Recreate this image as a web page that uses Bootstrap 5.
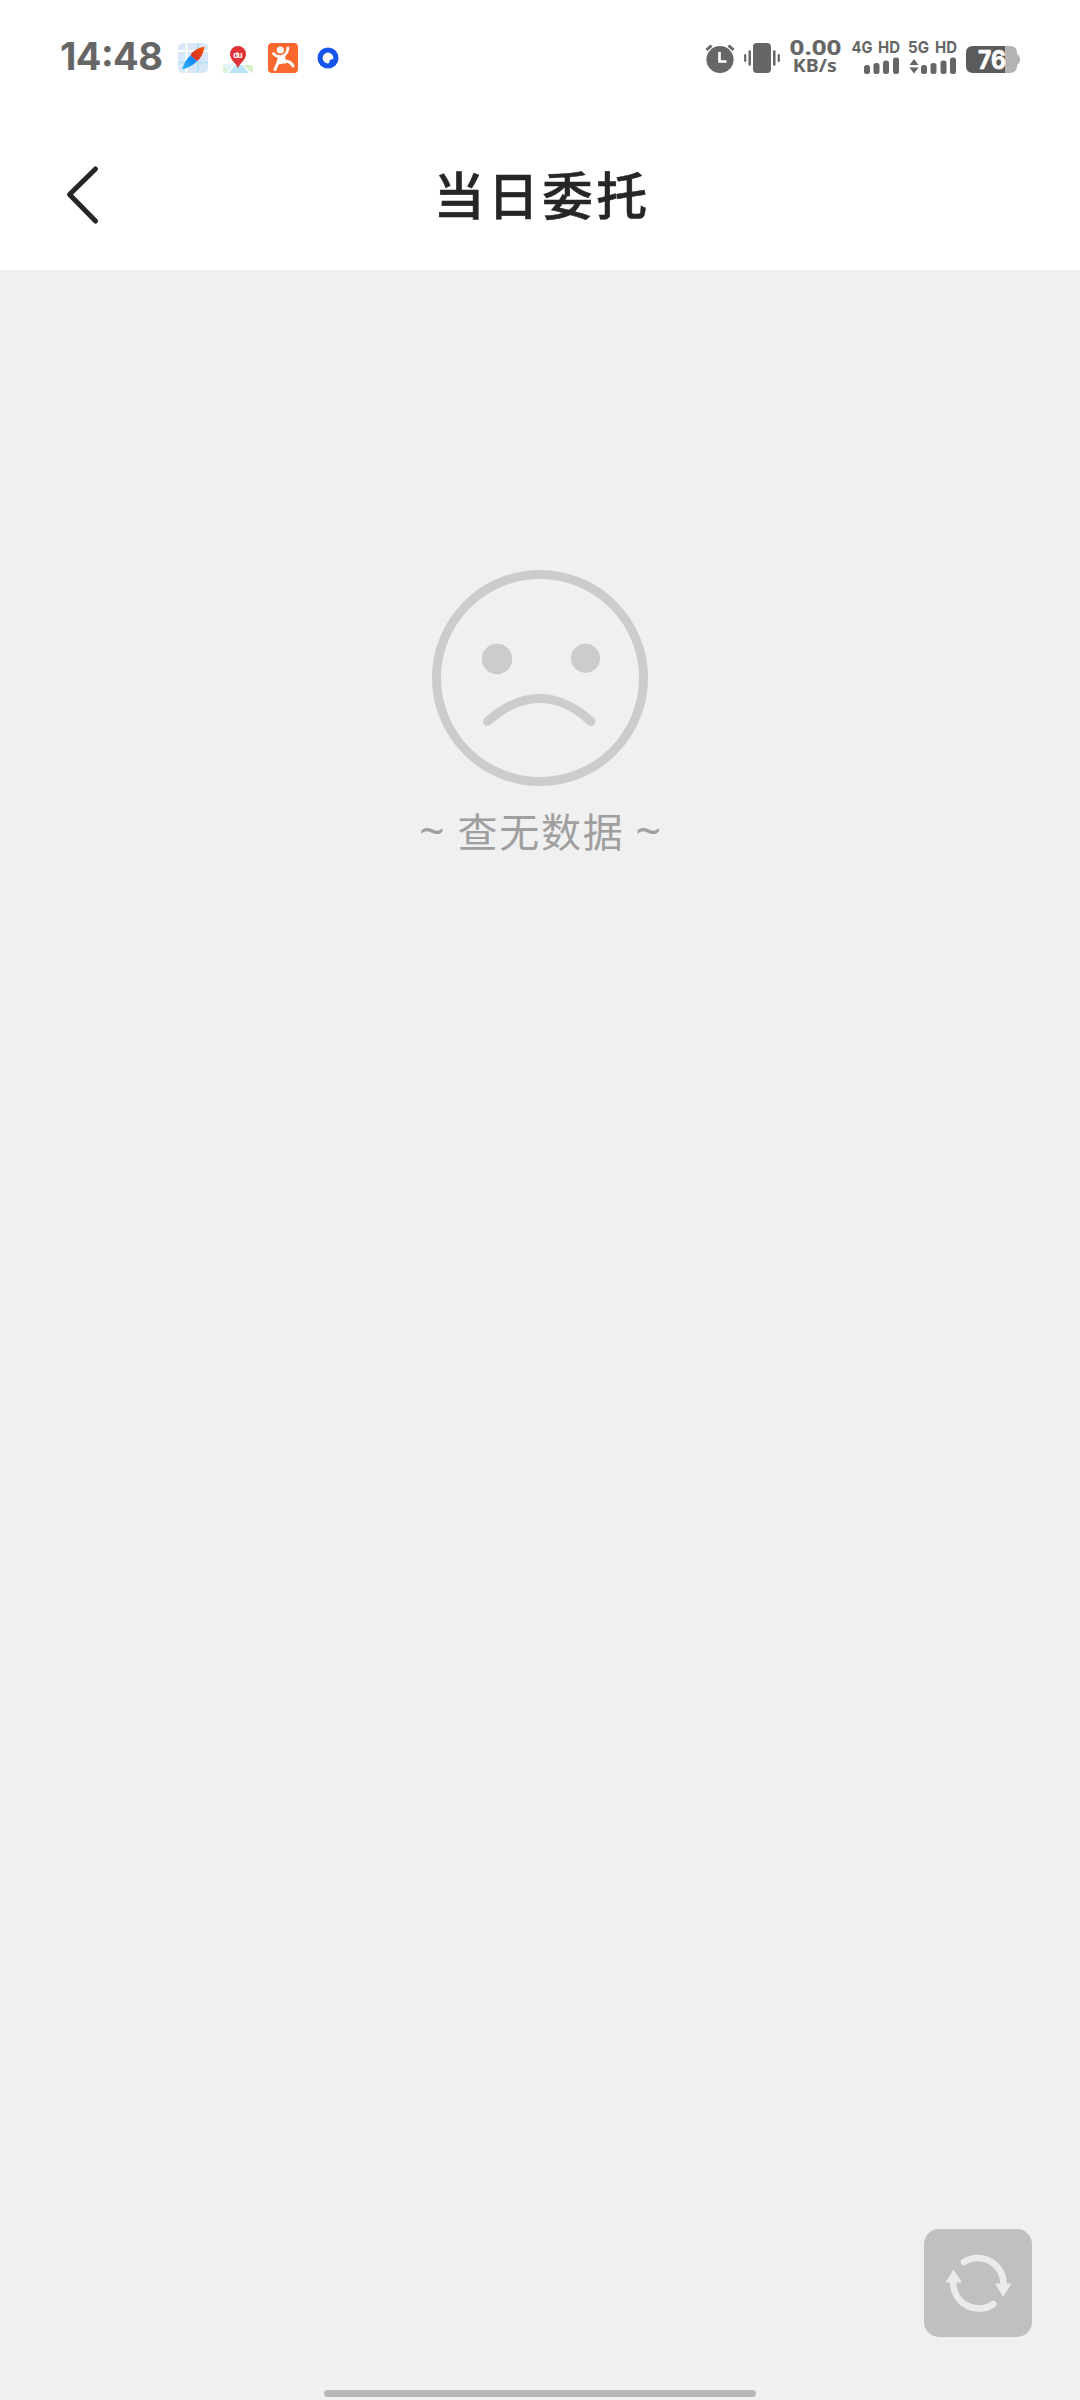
<!DOCTYPE html>
<html lang="zh-CN">
<head>
<meta charset="utf-8">
<meta name="viewport" content="width=device-width, initial-scale=1">
<title>当日委托</title>
<link rel="stylesheet" href="https://cdn.jsdelivr.net/npm/bootstrap@5.3.0/dist/css/bootstrap.min.css">
<style>
body{background:#f0f0f0;font-family:"Noto Sans CJK SC","Noto Sans",sans-serif}
.screen{height:2400px;overflow:hidden}
.status-bar{height:120px;padding:36px 59px 0 60px}
.status-bar svg{display:block;flex:none;overflow:visible;font-family:Inter,"Noto Sans",sans-serif;font-weight:700;fill:#666}
.status-bar .speed{margin-left:9px;font-family:"Noto Sans",sans-serif}
.gap-map{margin-left:14px}
.gap-app{margin-left:15px}
.gap-ring{margin-left:19px}
.gap-sys{margin-left:9px}
.gap-sim1{margin-left:10px}
.gap-sim2{margin-left:8px}
.title-bar{height:150px;padding:0 60px}
.back-link{width:60px;height:150px;padding:40px 0 0 5px}
.page-title{font-size:51px;line-height:74px;font-weight:500;letter-spacing:3.2px;color:#262626;padding-top:36px;padding-left:4px;-webkit-text-stroke:.5px #262626}
.empty-state{padding-top:300px}
.empty-text{font-size:40px;line-height:60px;letter-spacing:1.8px;color:#9f9f9f;margin-top:14px;padding-left:2px}
.tilde{font-family:"Noto Sans",sans-serif;font-size:45px;line-height:1}
.refresh-btn{width:108px;height:108px;border-radius:15px;background:#c0c0c0;margin:0 48px 53px 0}
.home-handle{width:432px;height:7px;border-radius:4px;background:#b7b7b7;margin-bottom:3px}
</style>
</head>
<body>
<div class="screen d-flex flex-column">
  <header class="bg-white">
    <div class="status-bar d-flex justify-content-between">
      <div class="d-flex">
        <svg width="104" height="40" viewBox="60 36 104 40"><text x="60" y="69.500" font-size="38" font-weight="700" textLength="103" lengthAdjust="spacing">14:48</text></svg>
        <!-- map with compass needle -->
        <svg class="gap-map" width="30" height="40" viewBox="178 36 30 40">
          <defs><linearGradient id="red" x1="1" y1="0" x2="0" y2="1"><stop stop-color="#ff5200"/><stop offset="1" stop-color="#c92c35"/></linearGradient>
          <linearGradient id="blue" x1="1" y1="0" x2="0" y2="1"><stop stop-color="#0876ee"/><stop offset="1" stop-color="#2bb8fa"/></linearGradient></defs>
          <rect x="178" y="43" width="30" height="30" rx="5" fill="#d8e8f9"/>
          <path d="M178 51h30M186.500 43v30" stroke="#fff" stroke-width="2"/><path d="M178 62.500h30M198 43v30" stroke="#b9e1f4" stroke-width="2"/>
          <path d="M204.500 46.500Q193 49 190.500 55.500L197 61Q203 57 204.500 46.500z" fill="url(#red)"/>
          <path d="M190.500 55.500Q185 60 182 69.500 192 67 197 61z" fill="url(#blue)"/>
        </svg>
        <!-- map pin -->
        <svg class="gap-app" width="30" height="40" viewBox="223 36 30 40">
          <path d="M225 64h9l-6 9h-3q-2 0-2-2v-5q0-2 2-2z" fill="#e4f5fa"/><path d="M235 65l7 0 7 8h-20z" fill="#b9e4f8"/><path d="M243 65h8q2 0 2 2v4l-1 2z" fill="#d6f0c5"/><path d="M223 66l5 4-4 3h-1z" fill="#daf1ca"/>
          <path d="M238 68.500c-1-5-8-8-8-14.500a8 8 0 0 1 16 0c0 6.500-7 9.500-8 14.500z" fill="#e13236"/>
          <text x="233.300" y="57.500" font-size="8" fill="#fff" textLength="9.300">du</text>
        </svg>
        <!-- dancing figure -->
        <svg class="gap-app" width="30" height="40" viewBox="268 36 30 40">
          <rect x="268" y="43" width="30" height="30" rx="4" fill="#fb682f"/><circle cx="280.300" cy="50" r="3.600" fill="#fff"/>
          <path d="M273.500 53.500q3 4 8 3 6-2 6.500-8.500" fill="none" stroke="#fff" stroke-width="2.800" stroke-linecap="round"/><path d="M279.500 57.500q-1.500 6-4.500 12M279 63q10-4.500 14 3" fill="none" stroke="#fff" stroke-width="3" stroke-linecap="round"/><path d="M278.500 56.500l6.500-1.500 1 8.500h-8z" fill="#fff"/>
        </svg>
        <!-- blue ring -->
        <svg class="gap-ring" width="22" height="40" viewBox="317 36 22 40">
          <circle cx="328" cy="58" r="10.500" fill="#1554ed"/><path d="M328 52.600a5.400 5.400 0 1 0 0 10.800q1.500 0 1.500-2.200 0-1.700 1.800-1.700 2.100 0 2.100-1.500a5.400 5.400 0 0 0-5.400-5.400z" fill="#fff"/>
        </svg>
      </div>
      <div class="d-flex">
        <!-- alarm -->
        <svg width="30" height="40" viewBox="705 36 30 40"><circle cx="720" cy="59.500" r="13.600"/><path d="M706.500 50l5-4.500M733.500 50l-5-4.500" stroke="#666" stroke-width="3"/><path d="M719.500 52v9.500h7" fill="none" stroke="#fff" stroke-width="2.700"/></svg>
        <!-- vibrate -->
        <svg class="gap-sys" width="37" height="40" viewBox="744 36 37 40"><rect x="753" y="43" width="18" height="30" rx="4"/><path d="M749.700 51.500v13M774.300 51.500v13" stroke="#666" stroke-width="2.500" stroke-linecap="round"/><path d="M745.200 55v6M778.800 55v6" stroke="#666" stroke-width="2.200" stroke-linecap="round"/></svg>
        <!-- network speed -->
        <svg class="speed" width="52" height="40" viewBox="790 36 52 40"><text x="789.500" y="54.500" font-size="22" textLength="52" lengthAdjust="spacingAndGlyphs">0.00</text><text x="792.800" y="72.300" font-size="18.500" textLength="44" lengthAdjust="spacingAndGlyphs">KB/s</text></svg>
        <!-- mobile signals -->
        <svg class="gap-sim1" width="48" height="40" viewBox="852 36 48 40"><text x="851.500" y="53" font-size="16.500" textLength="21" lengthAdjust="spacingAndGlyphs">4G</text><text x="878" y="53" font-size="16.500" textLength="22" lengthAdjust="spacingAndGlyphs">HD</text><rect x="864" y="65" width="6" height="9" rx="2.500"/><rect x="873.500" y="63" width="6" height="11" rx="2.500"/><rect x="883" y="60.500" width="6" height="13.500" rx="2.500"/><rect x="893" y="57.500" width="6" height="16.500" rx="2.500"/></svg>
        <svg class="gap-sim2" width="49" height="40" viewBox="908 36 49 40"><text x="908" y="53" font-size="16.500" textLength="21" lengthAdjust="spacingAndGlyphs">5G</text><text x="935" y="53" font-size="16.500" textLength="22" lengthAdjust="spacingAndGlyphs">HD</text><path d="M909.500 65l4.500-6 4.500 6zM909.500 67.500h9l-4.500 6z"/><rect x="921" y="65" width="6" height="9" rx="2.500"/><rect x="930.500" y="63" width="6" height="11" rx="2.500"/><rect x="940.500" y="60.500" width="6" height="13.500" rx="2.500"/><rect x="950" y="57.500" width="6" height="16.500" rx="2.500"/></svg>
        <!-- battery -->
        <svg class="gap-sys" width="55" height="40" viewBox="966 36 55 40"><path d="M1005 46h5q7 0 7 7v1q3 1.500 3 5.500t-3 5.500v1q0 7-7 7h-5z" fill="#b3b3b3"/><path d="M1005 46h-32q-7 0-7 7v13q0 7 7 7h32z" fill="#5b5b5b"/><text x="978" y="69" font-size="25" textLength="28" lengthAdjust="spacingAndGlyphs" fill="#fff" stroke="#fff" stroke-width=".7">76</text></svg>
      </div>
    </div>
    <nav class="title-bar d-flex justify-content-between">
      <a class="back-link" href="#" aria-label="返回"><svg class="d-block" width="40" height="70" viewBox="65 160 40 70"><path d="M95.500 169L69.500 194.500 95.500 221" fill="none" stroke="#262626" stroke-width="5" stroke-linecap="round" stroke-linejoin="round"/></svg></a>
      <h1 class="page-title m-0">当日委托</h1>
      <span class="back-link"></span>
    </nav>
  </header>
  <main class="empty-state flex-grow-1 d-flex flex-column align-items-center">
    <svg width="216" height="216" viewBox="0 0 216 216" fill="#ccc"><circle cx="108" cy="108" r="103.500" fill="none" stroke="#ccc" stroke-width="9"/><circle cx="65" cy="89" r="15.200"/><circle cx="153.500" cy="88.300" r="14.600"/><path d="M55.500 151.500Q81 128.500 107.500 128.500T159 151.500" fill="none" stroke="#ccc" stroke-width="9" stroke-linecap="round"/></svg>
    <p class="empty-text mb-0"><span class="tilde">~</span> 查无数据 <span class="tilde">~</span></p>
  </main>
  <footer class="d-flex flex-column">
    <button class="refresh-btn btn border-0 p-0 align-self-end" aria-label="刷新"><svg class="d-block" width="108" height="108" viewBox="0 0 108 108"><path d="M40 33A25.700 25.700 0 0 1 79.500 56M69.500 75A25.700 25.700 0 0 1 29.300 52" fill="none" stroke="#ebebeb" stroke-width="6.500" stroke-linecap="round"/><path d="M71 54.500h16.500L79.300 68zM21.500 53.500H38L29.500 40.500z" fill="#ebebeb"/></svg></button>
    <div class="home-handle align-self-center"></div>
  </footer>
</div>
<script src="https://cdn.jsdelivr.net/npm/bootstrap@5.3.0/dist/js/bootstrap.bundle.min.js"></script>
</body>
</html>
